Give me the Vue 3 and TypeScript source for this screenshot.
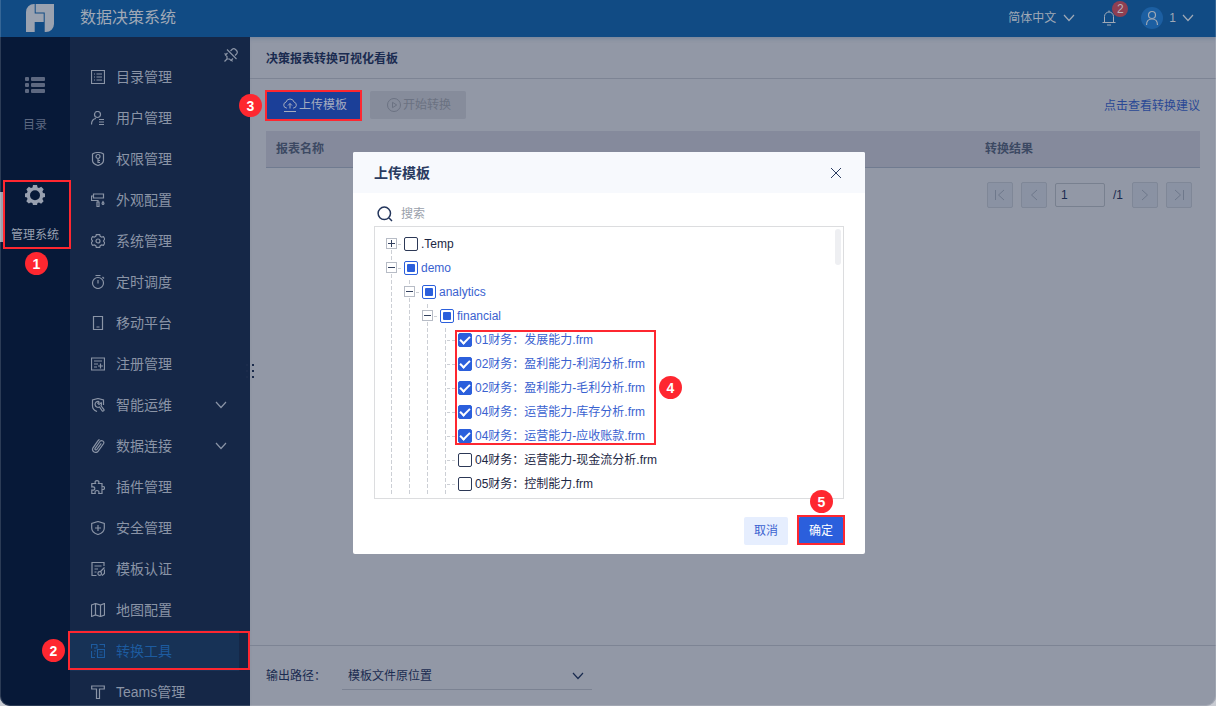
<script setup lang="ts">
import { ref } from 'vue'

interface MenuItem {
  label: string
  icon: string
  expandable?: boolean
  active?: boolean
}

interface TreeRow {
  label: string
  depth: number
  state: 'none' | 'partial' | 'checked'
  toggle?: 'plus' | 'minus'
}

interface TreeGroup {
  marked: boolean
  rows: TreeRow[]
}

const menu: MenuItem[] = [
  { label: '目录管理', icon: 'M.5 .5h13v13H.5z M3 4h1 M5.500 4H11 M3 7h1 M5.500 7H11 M3 10h1 M5.500 10H11' },
  { label: '用户管理', icon: 'M9.500 3.500a3 3 0 1 1-6 0a3 3 0 1 1 6 0z M.5 13.500C.5 10 2 8 5 7.500 M8 8.500h5 M8 11h5 M8 13.500h5' },
  { label: '权限管理', icon: 'M7 .5C9 .5 11 1 12.500 2v6.500C12.500 11 10 12.500 7 13.500C4 12.500 1.500 11 1.500 8.500V2C3 1 5 .5 7 .5z M9 4.500a2 2 0 1 1-4 0a2 2 0 1 1 4 0z M7 6.500v4.500 M7 8.500h2 M7 10.500h2' },
  { label: '外观配置', icon: 'M2.500 1h10v4h-10z M2.500 3H.5v4.500H7V9 M6 9h2v4.500H6z M12 8.500c1 1.300 1.200 2 .7 2.500c-.4.4-1 .4-1.400 0c-.5-.5-.3-1.200.7-2.500z' },
  { label: '系统管理', icon: 'M5.300 .6h3.400l.5 1.700l1.500.9l1.800-.5l1.300 2.300L12.500 7l1.300 2l-1.300 2.300l-1.800-.5l-1.500.9l-.5 1.700H5.300l-.5-1.700l-1.500-.9l-1.800.5L.2 9L1.500 7L.2 5l1.300-2.300l1.800.5l1.500-.9z M9 7a2 2 0 1 1-4 0a2 2 0 1 1 4 0z' },
  { label: '定时调度', icon: 'M12.500 8a5.500 5.500 0 1 1-11 0a5.500 5.500 0 1 1 11 0z M4.500 .5h5 M7 5v3.500 M11.500 2l1.500 1.500' },
  { label: '移动平台', icon: 'M2.500 .5h9v13h-9z M5.500 11h3' },
  { label: '注册管理', icon: 'M.5 1h13v12H.5z M3 4h8 M3 7h4 M3 10h3 M9.500 6.500v5 M7 9h5' },
  { label: '智能运维', icon: 'M12.500 7V2L7 .5L1.500 2v6c0 2.500 2 4.500 4.500 5.500 M8 3.500a3 3 0 1 0 .5 5.500l2.700 3.800c.8.9 2.400-.3 1.600-1.400L10 7.800c.6-1 .6-2 .2-3L8 6.500L6.800 5.300L8.500 3.700', expandable: true },
  { label: '数据连接', icon: 'M10.300 4.300l-4.500 6.200c-.7 1-2.400 0-1.700-1.200l4.800-6.800c1.500-2 5-.2 3.600 2.300l-5.300 7.400c-2 2.700-7.200.3-5.200-3.400l4.500-6.500c.5-.7 1-1.300 2-1.800', expandable: true },
  { label: '插件管理', icon: 'M.8 3.500H4.500C3.500 1.800 4.500.6 6 .6s2.500 1.200 1.500 2.900H11V7c1.600-.8 2.600-.2 2.600 1s-1 1.800-2.600 1v4.500H7.800C8.300 11.500 7.500 10.500 6 10.500S3.700 11.500 4.200 13.500H.8V10C3 10.500 3.800 9.700 3.800 8.500S3 6.500 .8 7z' },
  { label: '安全管理', icon: 'M7 .5L13.300 2.500V7c0 3.500-2.800 5.500-6.300 6.500C3.500 12.500.7 10.500.7 7V2.500z M7 4v6 M4 7h6' },
  { label: '模板认证', icon: 'M13 4V.5H1v13h4.500 M3.500 4h7 M3.500 7H7 M3.500 10h2 M13.500 5.500L9.500 9.500 M10.500 11.500a1.800 1.800 0 1 1-3.600 0a1.800 1.800 0 1 1 3.600 0z M11 13.500l2.500-2V7.500' },
  { label: '地图配置', icon: 'M.5 2l4-1.500l5 1.500l4-1.500V12l-4 1.500l-5-1.500l-4 1.500z M4.500 .5V12 M9.500 2v11.500' },
  { label: '转换工具', icon: 'M6 .5H.5v4 M.5 7v6.500H4 M3 4h3V.5 M8.500 .5h5v3 M3 7h2 M3 10h1 M6.500 5.500h7v8h-7z M8.500 8h3 M8.500 11h3', active: true },
  { label: 'Teams管理', icon: 'M.7 1h12.600v3H8.500v9.500h-3V4H.7z' },
]

const groups = ref<TreeGroup[]>([
  {
    marked: false,
    rows: [
      { label: '.Temp', depth: 0, state: 'none', toggle: 'plus' },
      { label: 'demo', depth: 0, state: 'partial', toggle: 'minus' },
      { label: 'analytics', depth: 1, state: 'partial', toggle: 'minus' },
      { label: 'financial', depth: 2, state: 'partial', toggle: 'minus' },
    ],
  },
  {
    marked: true,
    rows: [
      { label: '01财务：发展能力.frm', depth: 3, state: 'checked' },
      { label: '02财务：盈利能力-利润分析.frm', depth: 3, state: 'checked' },
      { label: '02财务：盈利能力-毛利分析.frm', depth: 3, state: 'checked' },
      { label: '04财务：运营能力-库存分析.frm', depth: 3, state: 'checked' },
      { label: '04财务：运营能力-应收账款.frm', depth: 3, state: 'checked' },
    ],
  },
  {
    marked: false,
    rows: [
      { label: '04财务：运营能力-现金流分析.frm', depth: 3, state: 'none' },
      { label: '05财务：控制能力.frm', depth: 3, state: 'none' },
    ],
  },
])

const page = ref('1')
const keyword = ref('')

function toggleRow(row: TreeRow) {
  row.state = row.state === 'checked' ? 'none' : 'checked'
}
</script>

<template>
  <div class="app">
    <header class="topbar">
      <svg class="logo" viewBox="0 0 28 28" aria-hidden="true">
        <path d="M8 0h.7v9.500h9V18H8.700v10H0V8a8 8 0 0 1 8-8z M9.700 0H28v20a8 8 0 0 1-8 8h-1.300V8.500h-9z" />
      </svg>
      <h1>数据决策系统</h1>
      <div class="tools">
        <button class="plain lang" type="button">
          简体中文
          <svg class="chev" viewBox="0 0 12 8"><path d="M1 1l5 5.500l5-5.500" /></svg>
        </button>
        <button class="plain bell" type="button" aria-label="消息">
          <svg viewBox="0 0 14 16"><path d="M2.500 12V6.500a4.500 4.500 0 0 1 9 0V12 M.5 12.500h13 M5 15h4 M7 .5v1.500" /></svg>
          <span class="count">2</span>
        </button>
        <button class="plain user" type="button">
          <span class="avatar">
            <svg viewBox="0 0 14 16"><path d="M10.500 5a3.500 3.500 0 1 1-7 0a3.500 3.500 0 1 1 7 0z M1.500 15c0-4 2-6 5.500-6s5.500 2 5.500 6" /></svg>
          </span>
          1
          <svg class="chev" viewBox="0 0 12 8"><path d="M1 1l5 5.500l5-5.500" /></svg>
        </button>
      </div>
    </header>

    <div class="body">
      <nav class="rail">
        <a class="rail-item" href="#catalog">
          <svg class="rail-icon" viewBox="0 0 20 18">
            <g fill="currentColor">
              <rect x="0" y="1" width="4" height="4" rx="1" /><rect x="6" y="1" width="14" height="4" rx="1" />
              <rect x="0" y="7" width="4" height="4" rx="1" /><rect x="6" y="7" width="14" height="4" rx="1" />
              <rect x="0" y="13" width="4" height="4" rx="1" /><rect x="6" y="13" width="14" height="4" rx="1" />
            </g>
          </svg>
          <span>目录</span>
        </a>
        <a class="rail-item current" href="#system">
          <svg class="rail-icon" viewBox="0 0 20 20">
            <path fill="currentColor" fill-rule="evenodd" d="M8 0h4l.6 2.400l1.400.6l2.200-1.200l2.500 2.500L17.400 6.400l.6 1.600l2 .5v3.500l-2 .6l-.6 1.500l1.200 2.200l-2.500 2.400l-2.100-1.200l-1.500.6L12 20H8l-.6-2l-1.500-.6l-2.100 1.200l-2.500-2.400l1.200-2.200L2 12.500L0 12V8.500L2 8l.6-1.600L1.400 4.300l2.500-2.500L6 3l1.500-.6z M15 10.200a5 5 0 1 0-10 0a5 5 0 1 0 10 0z" />
          </svg>
          <span>管理系统</span>
          <i class="mark"></i>
          <b class="step">1</b>
        </a>
      </nav>

      <nav class="menu">
        <button class="plain pin" type="button" aria-label="取消固定">
          <svg viewBox="0 0 14 14"><path d="M6.500 3L8 1.500a2.600 2.600 0 0 1 3.500 0l1 1a2.600 2.600 0 0 1 0 3.500L11 7.500 M3.500 5L1.500 7l1.500 1.500V11h2.500L7 12.500l2-2 M.5 13.500L3 11 M.5 5.500L2 6.500 M8.500 13.500l-1-1.500 M3 1.500L12.500 11" /></svg>
        </button>
        <a v-for="item in menu" :key="item.label" class="menu-item" :class="{ active: item.active }" href="#menu">
          <svg class="menu-icon" viewBox="0 0 14 14"><path :d="item.icon" /></svg>
          <span>{{ item.label }}</span>
          <svg v-if="item.expandable" class="chev" viewBox="0 0 12 8"><path d="M1 1l5 5.500l5-5.500" /></svg>
          <template v-if="item.active">
            <i class="mark"></i>
            <b class="step">2</b>
          </template>
        </a>
        <span class="splitter"><i></i><i></i><i></i><i></i><i></i><i></i></span>
      </nav>

      <main class="main">
        <h2>决策报表转换可视化看板</h2>
        <section class="content">
          <div class="toolbar">
            <button class="act primary" type="button">
              <svg viewBox="0 0 14 14"><path d="M4 10H3.500a3 3 0 0 1-.5-5.900a4.200 4.200 0 0 1 8.100 0A3 3 0 0 1 10.500 10H10 M7 10.500V5.500 M5 7.500l2-2l2 2 M1 13.500h12" /></svg>
              上传模板
              <i class="mark"></i>
              <b class="step">3</b>
            </button>
            <button class="act off" type="button" disabled>
              <svg viewBox="0 0 14 14"><path d="M13.500 7a6.500 6.500 0 1 1-13 0a6.500 6.500 0 1 1 13 0z M5.500 4.300v5.400L9.700 7z" /></svg>
              开始转换
            </button>
            <a class="advice" href="#advice">点击查看转换建议</a>
          </div>
          <table>
            <thead>
              <tr><th scope="col">报表名称</th><th class="result" scope="col">转换结果</th></tr>
            </thead>
          </table>
          <div class="pager">
            <button type="button" disabled aria-label="首页"><svg viewBox="0 0 12 12"><path d="M1.500 1v10 M10 1L4.500 6l5.500 5" /></svg></button>
            <button type="button" disabled aria-label="上一页"><svg viewBox="0 0 12 12"><path d="M9 1L3.500 6L9 11" /></svg></button>
            <input v-model="page" type="text" aria-label="页码" />
            <span class="total">/1</span>
            <button type="button" disabled aria-label="下一页"><svg viewBox="0 0 12 12"><path d="M3 1l5.500 5L3 11" /></svg></button>
            <button type="button" disabled aria-label="末页"><svg viewBox="0 0 12 12"><path d="M10.500 1v10 M2 1l5.500 5L2 11" /></svg></button>
          </div>
        </section>
        <footer class="output">
          <label for="path">输出路径：</label>
          <div class="select">
            <select id="path"><option>模板文件原位置</option></select>
            <svg class="chev" viewBox="0 0 12 8"><path d="M1 1l5 5.500l5-5.500" /></svg>
          </div>
        </footer>
      </main>
    </div>

    <div class="overlay">
      <div class="dialog" role="dialog" aria-labelledby="dialog-title">
        <div class="dialog-head">
          <h3 id="dialog-title">上传模板</h3>
          <button class="plain" type="button" aria-label="关闭"><svg viewBox="0 0 12 12"><path d="M1 1l10 10M11 1L1 11" /></svg></button>
        </div>
        <div class="dialog-body">
          <label class="search">
            <svg viewBox="0 0 16 16"><path d="M13.500 7.300a6.200 6.200 0 1 1-12.400 0a6.200 6.200 0 1 1 12.400 0z M11.800 11.800l3.200 3.200" /></svg>
            <input v-model="keyword" type="text" placeholder="搜索" aria-label="搜索" />
          </label>
          <div class="tree">
            <ul v-for="(group, g) in groups" :key="g">
              <li v-for="row in group.rows" :key="row.label" :class="row.state">
                <span v-for="n in row.depth" :key="n" class="guide"></span>
                <span class="guide own">
                  <button v-if="row.toggle" type="button" class="toggle" :class="row.toggle" aria-label="展开或收起"></button>
                </span>
                <label>
                  <input type="checkbox" :checked="row.state === 'checked'" :indeterminate="row.state === 'partial'" @change="toggleRow(row)" />
                  {{ row.label }}
                </label>
              </li>
              <template v-if="group.marked">
                <i class="mark"></i>
                <b class="step">4</b>
              </template>
            </ul>
            <i class="thumb"></i>
          </div>
        </div>
        <div class="dialog-foot">
          <button class="cancel" type="button">取消</button>
          <button class="ok" type="button">确定<i class="mark"></i><b class="step">5</b></button>
        </div>
      </div>
    </div>
  </div>
</template>

<style>
body {
  margin: 0;
  background: #c9ccd3;
}
</style>

<style scoped>
.app {
  position: relative;
  display: flex;
  flex-direction: column;
  height: 100vh;
  overflow: hidden;
  border-radius: 0 0 10px 10px;
  background: #9298a6;
  font-family: "Liberation Sans", "Noto Sans CJK SC", sans-serif;
  font-size: 12px;
  line-height: 16px;
  color: #1a2b50;
}
.app::after {
  content: "";
  position: absolute;
  inset: 0;
  z-index: 3;
  border: solid rgba(255, 255, 255, 0.15);
  border-width: 0 1px 1px;
  border-radius: 0 0 10px 10px;
  pointer-events: none;
}
.app *,
.app *::before,
.app *::after {
  box-sizing: border-box;
}
button,
input,
select {
  font: inherit;
  color: inherit;
  margin: 0;
  padding: 0;
}
button {
  cursor: pointer;
}
a {
  color: inherit;
  text-decoration: none;
}
h1,
h2,
h3,
ul {
  margin: 0;
  padding: 0;
}
svg {
  flex: none;
  fill: none;
  stroke: currentColor;
}
.plain {
  display: flex;
  align-items: center;
  border: 0;
  background: none;
}
.chev {
  width: 12px;
  height: 8px;
  stroke-width: 1.2;
}
.mark {
  position: absolute;
  border: 2px solid #fe2730;
  pointer-events: none;
}
.step {
  position: absolute;
  z-index: 2;
  width: 23px;
  height: 23px;
  border-radius: 50%;
  background: #fe2730;
  color: #fff;
  font-size: 14px;
  line-height: 24px;
  text-align: center;
}

/* top bar */
.topbar {
  display: flex;
  flex: none;
  align-items: center;
  height: 37px;
  padding: 0 22px 2px 26px;
  background: #114b84;
  color: #a0a9b6;
}
.logo {
  width: 28px;
  height: 28px;
  fill: #9aa2b0;
  stroke: none;
}
h1 {
  margin-left: 26px;
  font-size: 16px;
  font-weight: 400;
  line-height: 24px;
}
.tools {
  display: flex;
  align-items: center;
  margin-left: auto;
}
.lang {
  gap: 7px;
}
.bell {
  position: relative;
  margin-left: 27px;
}
.bell svg {
  width: 14px;
  height: 16px;
}
.count {
  position: absolute;
  top: -9px;
  left: 10px;
  width: 16px;
  height: 16px;
  border-radius: 50%;
  background: #8f3f52;
  color: #b9b3bd;
  text-align: center;
}
.user {
  gap: 6px;
  margin-left: 25px;
}
.avatar {
  display: grid;
  place-items: center;
  width: 22px;
  height: 22px;
  border-radius: 50%;
  background: #1c5fa2;
}
.avatar svg {
  width: 14px;
  height: 16px;
  stroke-width: 1.2;
}

.body {
  display: flex;
  flex: 1;
  min-height: 0;
}

/* left rail */
.rail {
  flex: none;
  width: 70px;
  padding-top: 13px;
  background: #071938;
  color: #5d6880;
}
.rail-item {
  position: relative;
  z-index: 2;
  display: flex;
  flex-direction: column;
  align-items: center;
  gap: 22px;
  height: 110px;
  padding-top: 25px;
}
.rail-icon {
  width: 20px;
  height: 20px;
  stroke: none;
}
.current {
  color: #98a0b0;
}
.current::before {
  content: "";
  position: absolute;
  top: 32px;
  left: 0;
  width: 3px;
  height: 50px;
  background: #9aa1ae;
}
.current .mark {
  inset: 20px -1px 21px 3px;
}
.current .step {
  top: 92px;
  left: 25px;
}

/* menu */
.menu {
  position: relative;
  z-index: 1;
  flex: none;
  width: 180px;
  padding-top: 19px;
  background: #152747;
  color: #8a94a6;
}
.pin {
  position: absolute;
  top: 11px;
  right: 12px;
}
.pin svg {
  width: 14px;
  height: 14px;
  stroke-width: 1.2;
}
.menu-item {
  position: relative;
  display: flex;
  align-items: center;
  height: 41px;
  padding: 0 23px 0 21px;
  font-size: 14px;
  line-height: 20px;
}
.menu-icon {
  width: 14px;
  height: 14px;
  margin: 1px 11px 0 0;
  stroke-width: 1.2;
}
.menu-item .chev {
  margin-left: auto;
}
.active {
  color: #1d5b9f;
  background: linear-gradient(#173256, #173256) 0 0 / 169px 100% no-repeat;
}
.active .mark {
  inset: 1px 0 1px -2px;
}
.active .step {
  top: 9px;
  left: -28px;
}
.splitter {
  position: absolute;
  top: 327px;
  right: -4px;
  display: grid;
  grid-template-columns: 2px 2px;
  gap: 4px;
}
.splitter i {
  width: 2px;
  height: 2px;
  background: #1b2b4b;
}

/* main */
.main {
  display: flex;
  flex: 1;
  flex-direction: column;
  min-width: 0;
  box-shadow: inset 0 4px 5px -3px rgba(20, 60, 110, 0.25);
}
h2 {
  padding: 14px 16px 11px;
  border-bottom: 1px solid #7d8494;
  font-size: 12px;
  font-weight: 600;
  line-height: 16px;
}
.content {
  flex: 1;
  padding: 12px 16px;
}
.toolbar {
  display: flex;
  align-items: center;
  gap: 8px;
}
.act {
  position: relative;
  display: flex;
  align-items: center;
  justify-content: center;
  gap: 2px;
  width: 96px;
  height: 28px;
  padding-left: 2px;
  border: 0;
  border-radius: 2px;
}
.act svg {
  width: 14px;
  height: 14px;
}
.primary {
  background: #1b3f98;
  color: #a4acbf;
}
.primary .mark {
  inset: -1px 0 -2px -1px;
}
.primary .step {
  top: 3px;
  left: -27px;
}
.off {
  background: #868c9b;
  color: #6b7282;
}
.advice {
  margin-left: auto;
  padding-top: 2px;
  color: #2a4895;
}
table {
  width: 100%;
  margin-top: 12px;
  border-collapse: separate;
  border-spacing: 0;
  background: #858a9c;
}
th {
  height: 37px;
  padding: 0 10px;
  border-bottom: 1px solid #707b90;
  color: #3c4963;
  font-weight: 600;
  text-align: left;
}
.result {
  width: 225px;
}
.pager {
  display: flex;
  align-items: center;
  justify-content: flex-end;
  gap: 8px;
  padding: 14px 8px;
}
.pager button {
  display: grid;
  place-items: center;
  width: 26px;
  height: 26px;
  border: 1px solid #7f8797;
  border-radius: 2px;
  background: #8a92a3;
  color: #6e788b;
}
.pager svg {
  width: 12px;
  height: 12px;
}
.pager input {
  width: 50px;
  height: 24px;
  padding: 0 5px;
  border: 1px solid #78808f;
  border-radius: 2px;
  background: none;
}
.total {
  width: 11px;
}
.output {
  display: flex;
  align-items: center;
  height: 61px;
  padding: 0 16px;
  border-top: 1px solid #7d8494;
}
.output label {
  width: 76px;
}
.select {
  position: relative;
  display: flex;
  align-items: center;
  width: 250px;
  height: 28px;
  border-bottom: 1px solid #7b8292;
}
.select select {
  width: 100%;
  height: 100%;
  padding: 0 6px;
  border: 0;
  background: none;
  appearance: none;
}
.select .chev {
  position: absolute;
  right: 8px;
  pointer-events: none;
}

/* dialog */
.overlay {
  position: absolute;
  inset: 0;
  z-index: 2;
  display: grid;
  place-items: center;
  pointer-events: none;
}
.dialog {
  width: 512px;
  border-radius: 2px;
  background: #fff;
  margin-left: 2px;
  pointer-events: auto;
}
.dialog-head {
  display: flex;
  align-items: center;
  justify-content: space-between;
  height: 41px;
  padding: 0 23px 0 21px;
  border-radius: 2px 2px 0 0;
  background: #f7f9fd;
  color: #2a3b60;
}
.dialog-head svg {
  width: 12px;
  height: 12px;
}
h3 {
  font-size: 14px;
  font-weight: 600;
  line-height: 20px;
}
.dialog-body {
  padding: 9px 21px 0;
}
.search {
  display: flex;
  align-items: center;
  gap: 8px;
  height: 24px;
  padding-left: 3px;
  color: #24365c;
}
.search svg {
  width: 16px;
  height: 16px;
  stroke-width: 1.5;
}
.search input {
  flex: 1;
  border: 0;
  outline: 0;
  background: none;
}
.search input::placeholder {
  color: #9a9fab;
}
.tree {
  position: relative;
  height: 273px;
  padding: 5px 0 2px 11px;
  border: 1px solid #dcdddf;
  color: #1c2744;
}
.tree ul {
  position: relative;
  list-style: none;
}
.tree li {
  display: flex;
  height: 24px;
}
.tree label {
  display: flex;
  align-items: center;
  gap: 3px;
  white-space: nowrap;
}
.guide {
  position: relative;
  flex: none;
  width: 18px;
  background: repeating-linear-gradient(#cccfd5 0 4px, transparent 4px 6px) 5px 0 / 1px 100% no-repeat;
}
.own::after {
  content: "";
  position: absolute;
  top: 12px;
  left: 7px;
  width: 10px;
  height: 1px;
  background: repeating-linear-gradient(90deg, #cccfd5 0 3px, transparent 3px 5px);
}
.tree ul:first-child li:first-child .guide {
  background-position: 5px 12px;
}
.toggle {
  position: absolute;
  z-index: 1;
  top: 6px;
  left: 0;
  width: 11px;
  height: 11px;
  border: 1px solid #b7bcc6;
  background: linear-gradient(#33415f, #33415f) center / 7px 1px no-repeat #fff;
}
.toggle.plus {
  background: linear-gradient(#33415f, #33415f) center / 7px 1px no-repeat,
    linear-gradient(#33415f, #33415f) center / 1px 7px no-repeat #fff;
}
.tree input {
  position: relative;
  flex: none;
  width: 14px;
  height: 14px;
  border: 1px solid #2c3856;
  border-radius: 2px;
  background: #fff;
  appearance: none;
}
.partial,
.checked {
  color: #3a62d0;
}
.tree .partial input {
  border-color: #2b5fdc;
}
.tree .partial input::after {
  content: "";
  position: absolute;
  inset: 2px;
  border-radius: 1px;
  background: #2b5fdc;
}
.tree .checked input {
  border-color: #2b5fdc;
  background: #2b5fdc;
}
.tree .checked input::after {
  content: "";
  position: absolute;
  top: 2px;
  left: 1px;
  width: 10px;
  height: 6px;
  border: solid #fff;
  border-width: 0 0 2px 2px;
  transform: rotate(-45deg);
}
.tree .mark {
  top: 2px;
  left: 69px;
  width: 201px;
  height: 115px;
}
.tree .step {
  top: 48px;
  left: 273px;
}
.thumb {
  position: absolute;
  top: 2px;
  right: 2px;
  width: 6px;
  height: 36px;
  border-radius: 3px;
  background: #eeeff2;
}
.dialog-foot {
  display: flex;
  justify-content: flex-end;
  gap: 10px;
  padding: 18px 21px 9px;
}
.dialog-foot button {
  position: relative;
  height: 28px;
  border: 0;
  border-radius: 2px;
}
.dialog-foot .cancel {
  width: 44px;
  background: #e6eefe;
  color: #3a62d0;
}
.dialog-foot .ok {
  width: 46px;
  background: #2b5fdc;
  color: #fff;
}
.ok .mark {
  inset: -2px -1px 0;
}
.ok .step {
  top: -27px;
  left: 12px;
}
</style>
